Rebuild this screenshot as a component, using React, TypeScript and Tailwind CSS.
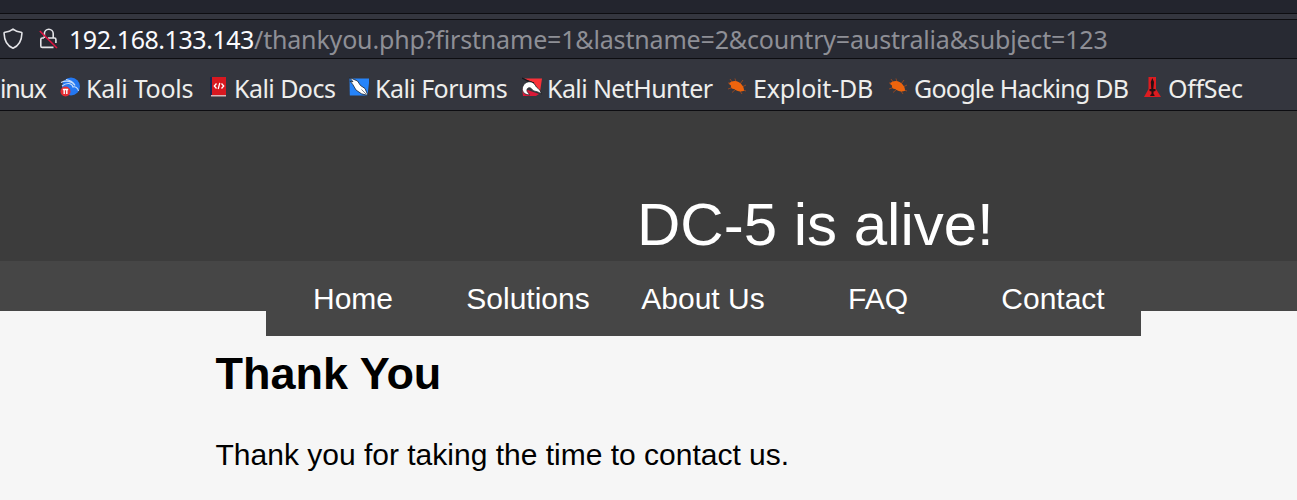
import type { ReactNode } from 'react';

function ShieldIcon() {
  return (
    <svg className="-mt-px ml-[3px] h-[22px] w-5 shrink-0" viewBox="0 0 20 22" fill="none" stroke="#e4e4e8" strokeWidth="1.6" strokeLinejoin="round">
      <path d="M10 1.2C7.8 3 5 4 2 4.3C1.1 4.4 1 4.7 1.1 5.5C1.3 12.8 3.8 17.6 10 20.3C16.2 17.6 18.7 12.8 18.9 5.5C19 4.7 18.9 4.4 18 4.3C15 4 12.2 3 10 1.2Z" />
    </svg>
  );
}

function InsecureIcon() {
  return (
    <svg className="-mt-px ml-4 h-[22px] w-5 shrink-0" viewBox="0 0 20 22" fill="none" stroke="#e4e4e8" strokeWidth="1.6">
      <path d="M5.4 10V5.6A4.4 4.4 0 0 1 14.2 5.6V10M9 10H15.4A1.5 1.5 0 0 1 16.9 11.5V15M14.5 19.4H3.3A1.5 1.5 0 0 1 1.8 17.9V11.5A1.5 1.5 0 0 1 3.3 10H5" />
      <path d="M.8 3L18 20" stroke="#e0123f" strokeWidth="1.6" />
    </svg>
  );
}

function ToolsIcon() {
  return (
    <svg className="h-5 w-5" viewBox="0 0 20 20">
      <circle cx="11" cy="9.5" r="9" fill="#2478f2" />
      <path d="M1 5.5C6 3 12 4 15 8.5M2 9C7 5 12 6 13 10C15 9 18 11 18.5 14M6 2.5C10 3 13 5 15 8" fill="none" stroke="#c5dcfa" strokeWidth="1.1" />
      <circle cx="5.5" cy="14.5" r="5" fill="#e52c32" />
      <path d="M2.8 12.5H8.2M4.2 12.5V17M6.8 12.5V17" stroke="white" strokeWidth="1.4" />
    </svg>
  );
}

function DocsIcon() {
  return (
    <svg className="h-5 w-4" viewBox="0 0 16 20">
      <path d="M0 0H16V18H0Z" fill="#d71820" />
      <path d="M0 0H2V18H0Z" fill="#172751" />
      <path d="M1 18H16V19.5H1Z" fill="#d9b7b9" />
      <path d="M6.5 6.5L4.3 9L6.5 11.5M11.5 6.5L13.7 9L11.5 11.5M9.8 5.8L8.2 12" fill="none" stroke="white" strokeWidth="1.3" />
    </svg>
  );
}

function ForumsIcon() {
  return (
    <svg className="h-5 w-5" viewBox="0 0 20 20">
      <path d="M.5 1.5H20.5L18.5 18.5H.8Z" fill="#2684fa" />
      <path d="M.5 .5L8.5 4L11.5 8.5L16 11.5L19 18.5L12.5 16.8L7 13L3.8 7.5L1 4L4 4.8Z" fill="white" stroke="#182334" strokeWidth=".8" />
      <path d="M12.5 12.5L17.5 17.5" fill="none" stroke="#46505c" strokeWidth=".7" />
    </svg>
  );
}

function NetHunterIcon() {
  return (
    <svg className="h-5 w-5" viewBox="0 0 20 20">
      <path d="M2 1.5H20L18 15L12 6Z" fill="#fa3038" />
      <path d="M0 11L17 17L14 19H1Z" fill="#d91938" />
      <path d="M0 1L8 5M4 3L12 6" stroke="#15161b" strokeWidth="1.2" />
      <path d="M7.5 18C0 17.5-1.2 11.5 2 7.5C5 3.5 11 4 13.3 8.2C14.5 11.4 18.5 11.5 19.2 17C15.5 13.5 12 15.5 9.5 11.7C7.2 9.2 3.9 11.5 5.2 14.6C6 16 7.2 16.5 7.5 18Z" fill="white" stroke="#17171b" strokeWidth=".7" />
    </svg>
  );
}

function BugIcon() {
  return (
    <svg className="-ml-px h-5 w-5" viewBox="0 0 20 20">
      <path d="M1 6H6M1 12L7 10M5 15.5L9 12M13 14L15 17M15 10L19 8M13 7L16 3M9 5L8 1.5M5 5L3 2M16 13L19 14" stroke="#9b4a20" strokeWidth=".9" />
      <path d="M2 7C3.5 3.8 8.5 3.3 11.5 5C15 7 17.3 10.5 17 13.7C14 15.2 9.5 14.3 7.3 12C5 12.2 3.4 10.5 4 8.5Z" fill="#ed640d" />
    </svg>
  );
}

function OffSecIcon() {
  return (
    <svg className="h-5 w-[17px]" viewBox="0 0 17 20">
      <path d="M4.5 0H12V12L17 20H0L4.5 12Z" fill="#dd1c20" />
      <path d="M8.3 1L10 5L9.3 12H11.5V14L9.5 14.5V17L10.5 18V19H6.3V18L7.5 17V14.5L5.5 14V12H7.3L6.8 5Z" fill="#251113" />
    </svg>
  );
}

function Bookmark({ icon, label, box, text }: { icon: ReactNode; label: string; box: string; text: string }) {
  return (
    <div className={`flex shrink-0 items-center ${box}`}>
      <span className="-mt-[3px] flex w-[26px] shrink-0">{icon}</span>
      <span className={text}>{label}</span>
    </div>
  );
}

export default function App() {
  return (
    <div className="flex h-[500px] w-full flex-col overflow-hidden whitespace-nowrap bg-[#f6f6f6] font-['Liberation_Sans',sans-serif]">
      <header className="font-['Noto_Sans',sans-serif] text-[25px]">
        <div className="h-3.5 border-b border-[#0d0d11] bg-[#23252e]" />
        <div className="h-1.5 border-b border-[#0d0d11] bg-[#34363f]" />
        <div className="flex h-[39px] items-center border-b border-[#0d0d11] bg-[#282a33]">
          <ShieldIcon />
          <InsecureIcon />
          <div className="ml-[10px] flex pt-[2px] text-[#8e8f96]">
            <span className="w-[185px] tracking-[-0.45px] text-[#fbfbfe]">192.168.133.143</span>
            <span className="tracking-[-0.17px]">/thankyou.php?firstname=1&amp;lastname=2&amp;country=australia&amp;subject=123</span>
          </div>
        </div>
        <div className="flex h-[52px] items-center border-b border-[#0d0d11] bg-[#34363e] pt-[8px] text-[#eeeeec]">
          <span className="w-[60px] shrink-0 tracking-[-1.2px]">inux</span>
          <Bookmark icon={<ToolsIcon />} label="Kali Tools" box="w-[150px]" text="tracking-[-0.25px]" />
          <Bookmark icon={<DocsIcon />} label="Kali Docs" box="w-[139px]" text="-ml-[2px] tracking-[-0.55px]" />
          <Bookmark icon={<ForumsIcon />} label="Kali Forums" box="w-[173px]" text="tracking-[-0.55px]" />
          <Bookmark icon={<NetHunterIcon />} label="Kali NetHunter" box="w-[206px]" text="-ml-px tracking-[-0.6px]" />
          <Bookmark icon={<BugIcon />} label="Exploit-DB" box="w-[161px]" text="-ml-px tracking-[-0.2px]" />
          <Bookmark icon={<BugIcon />} label="Google Hacking DB" box="w-[255px]" text="-ml-px tracking-[-0.75px]" />
          <Bookmark icon={<OffSecIcon />} label="OffSec" box="w-[110px]" text="-ml-[2px] tracking-[-0.3px]" />
        </div>
      </header>
      <div className="h-[150px] shrink-0 bg-[#3c3c3c] pt-[79px] pl-[637px] text-[60px] leading-[69px] text-white">DC-5 is alive!</div>
      <div className="h-[50px] shrink-0 bg-[#464646]">
        <nav className="ml-[266px] grid h-[75px] w-[875px] grid-cols-5 bg-[#464646] text-center text-[30px] leading-[75px] text-white">
          <a className="pr-px">Home</a>
          <a className="pr-px">Solutions</a>
          <a className="pr-px">About Us</a>
          <a className="pr-px">FAQ</a>
          <a className="pr-px">Contact</a>
        </nav>
      </div>
      <main className="pt-[37px] pl-[215.5px] text-black">
        <h1 className="text-[45px] leading-[52px] font-bold">Thank You</h1>
        <p className="mt-[37px] text-[30px] leading-[36px]">Thank you for taking the time to contact us.</p>
      </main>
    </div>
  );
}
